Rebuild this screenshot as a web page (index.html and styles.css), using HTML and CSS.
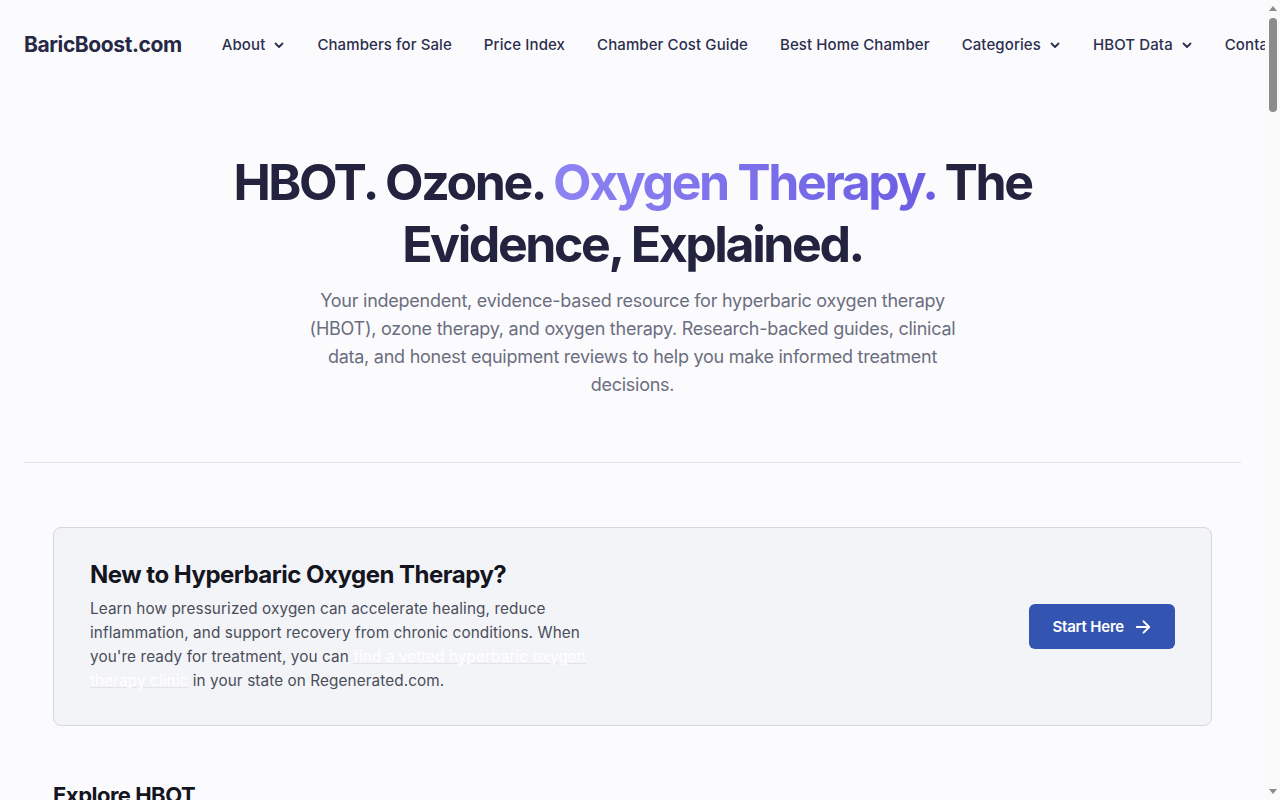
FILE: index.html
```html
<!DOCTYPE html>
<html lang="en">
<head>
    <meta charset="UTF-8">
    <meta name="viewport" content="width=device-width, initial-scale=1.0">
    <title>BaricBoost.com - HBOT, Ozone and Oxygen Therapy</title>
    <link rel="stylesheet" href="styles.css">
</head>
<body>
    <header class="site-header">
        <a href="#" class="logo">BaricBoost.com</a>
        <nav class="navbar">
            <a href="#" class="nav-item">About
                <svg class="chev" viewBox="0 0 12 12"><path d="M2.5 4.5 6 8l3.5-3.5"/></svg>
            </a>
            <a href="#" class="nav-item">Chambers for Sale</a>
            <a href="#" class="nav-item">Price Index</a>
            <a href="#" class="nav-item">Chamber Cost Guide</a>
            <a href="#" class="nav-item">Best Home Chamber</a>
            <a href="#" class="nav-item">Categories
                <svg class="chev" viewBox="0 0 12 12"><path d="M2.5 4.5 6 8l3.5-3.5"/></svg>
            </a>
            <a href="#" class="nav-item">HBOT Data
                <svg class="chev" viewBox="0 0 12 12"><path d="M2.5 4.5 6 8l3.5-3.5"/></svg>
            </a>
            <a href="#" class="nav-item">Contact</a>
        </nav>
    </header>

    <section class="hero">
        <h1>HBOT. Ozone. <span class="accent">Oxygen Therapy.</span> The Evidence, Explained.</h1>
        <p class="lead">Your independent, evidence-based resource for hyperbaric oxygen therapy (HBOT), ozone therapy, and oxygen therapy. Research-backed guides, clinical data, and honest equipment reviews to help you make informed treatment decisions.</p>
    </section>

    <hr class="divider">

    <main class="container">
        <div class="intro-card">
            <div class="intro-text">
                <h2>New to Hyperbaric Oxygen Therapy?</h2>
                <p>Learn how pressurized oxygen can accelerate healing, reduce inflammation, and support recovery from chronic conditions. When you're ready for treatment, you can <a href="#" class="clinic-link">find a vetted hyperbaric oxygen therapy clinic</a> in your state on Regenerated.com.</p>
            </div>
            <a href="#" class="start-btn">Start Here
                <svg viewBox="0 0 16 16"><path d="M2.5 8h11M8.5 3l5 5-5 5"/></svg>
            </a>
        </div>

        <h2 class="section-title">Explore HBOT</h2>
        <div class="topic-grid">
            <a href="#" class="topic-card">
                <h3>How HBOT Works</h3>
                <p>Pressure, dissolved oxygen and what happens inside the body during a session.</p>
            </a>
            <a href="#" class="topic-card">
                <h3>Conditions Treated</h3>
                <p>Approved indications and the research behind off-label uses.</p>
            </a>
            <a href="#" class="topic-card">
                <h3>Home Chambers</h3>
                <p>Soft and hard shell chambers compared by pressure, size and price.</p>
            </a>
        </div>
    </main>

    <!-- barra de rolagem da janela -->
    <div class="scroll-rail">
        <span class="rail-arrow up"></span>
        <span class="rail-thumb"></span>
        <span class="rail-arrow down"></span>
    </div>
</body>
</html>
```

FILE: styles.css
```css
body {
    font-family: 'Inter', 'Liberation Sans', sans-serif;
    background-color: #fbfbfd;
    color: #262845;
    margin: 0 15px 0 0;
    padding: 0;
    overflow-x: hidden;
}

a {
    text-decoration: none;
    color: inherit;
}

/* Cabeçalho */
.site-header {
    display: flex;
    align-items: center;
    gap: 40px;
    padding: 32px 24px 30px;
    white-space: nowrap;
    overflow: hidden;
}

.logo {
    font-size: 21px;
    font-weight: 700;
    letter-spacing: -0.4px;
    color: #262845;
}

.navbar {
    display: flex;
    align-items: center;
    gap: 32px;
}

.nav-item {
    display: flex;
    align-items: center;
    gap: 8px;
    font-size: 15px;
    font-weight: 500;
    letter-spacing: 0.1px;
    color: #2c2f4e;
}

.chev {
    width: 12px;
    height: 12px;
    fill: none;
    stroke: #2c2f4e;
    stroke-width: 1.8;
    stroke-linecap: round;
    stroke-linejoin: round;
}

/* Hero */
.hero {
    text-align: center;
    padding: 64px 24px 63px;
}

.hero h1 {
    max-width: 860px;
    margin: 0 auto;
    font-size: 50px;
    font-weight: 700;
    line-height: 62px;
    letter-spacing: -2.4px;
    color: #23233f;
}

.accent {
    background: linear-gradient(90deg, #8d83f2, #6b5de3);
    -webkit-background-clip: text;
    background-clip: text;
    color: transparent;
}

.lead {
    max-width: 650px;
    margin: 12px auto 0;
    font-size: 18px;
    line-height: 28px;
    letter-spacing: -0.25px;
    color: #6b6e80;
}

.divider {
    margin: 0 24px;
    border: none;
    border-top: 1px solid #e3e4e9;
}

/* Conteúdo */
.container {
    max-width: 1159px;
    margin: 0 auto;
    padding: 64px 0 60px;
}

.intro-card {
    display: flex;
    align-items: center;
    justify-content: space-between;
    background-color: #f3f4f7;
    border: 1px solid #d6d8de;
    border-radius: 8px;
    padding: 32px 36px;
}

.intro-text {
    max-width: 505px;
}

.intro-text h2 {
    margin: 0 0 8px;
    font-size: 24px;
    font-weight: 700;
    letter-spacing: -0.5px;
    color: #14151f;
}

.intro-text p {
    margin: 0;
    font-size: 15.3px;
    line-height: 24px;
    letter-spacing: 0.1px;
    color: #4a4d5a;
}

.clinic-link {
    color: #ffffff;
    text-decoration: underline;
    text-decoration-color: #e2e4ea;
}

.start-btn {
    display: flex;
    align-items: center;
    gap: 10px;
    background-color: #3355b1;
    color: white;
    padding: 13px 23px;
    border-radius: 6px;
    font-size: 15px;
    font-weight: 600;
    letter-spacing: -0.2px;
}

.start-btn svg {
    width: 18px;
    height: 18px;
    fill: none;
    stroke: white;
    stroke-width: 1.8;
    stroke-linecap: round;
    stroke-linejoin: round;
}

.section-title {
    margin: 56px 0 20px;
    font-size: 22px;
    font-weight: 700;
    letter-spacing: -0.5px;
    color: #14151f;
}

.topic-grid {
    display: grid;
    grid-template-columns: repeat(3, 1fr);
    gap: 20px;
}

.topic-card {
    background-color: #fff;
    border: 1px solid #e3e4e9;
    border-radius: 8px;
    padding: 24px;
}

.topic-card h3 {
    margin: 0 0 8px;
    font-size: 18px;
    color: #14151f;
}

.topic-card p {
    margin: 0;
    font-size: 15px;
    line-height: 24px;
    color: #4a4d5a;
}

/* Barra de rolagem */
.scroll-rail {
    position: fixed;
    top: 0;
    right: 0;
    bottom: 0;
    width: 15px;
    background-color: #fafafa;
    display: flex;
    flex-direction: column;
    align-items: center;
    padding: 6px 0;
    box-sizing: border-box;
}

.rail-thumb {
    width: 8px;
    height: 94px;
    margin-top: 7px;
    background-color: #8c8c8c;
    border-radius: 4px;
}

.rail-arrow {
    width: 0;
    height: 0;
    border-left: 4px solid transparent;
    border-right: 4px solid transparent;
}

.rail-arrow.up {
    border-bottom: 5px solid #8c8c8c;
}

.rail-arrow.down {
    margin-top: auto;
    border-top: 5px solid #8c8c8c;
}
```
